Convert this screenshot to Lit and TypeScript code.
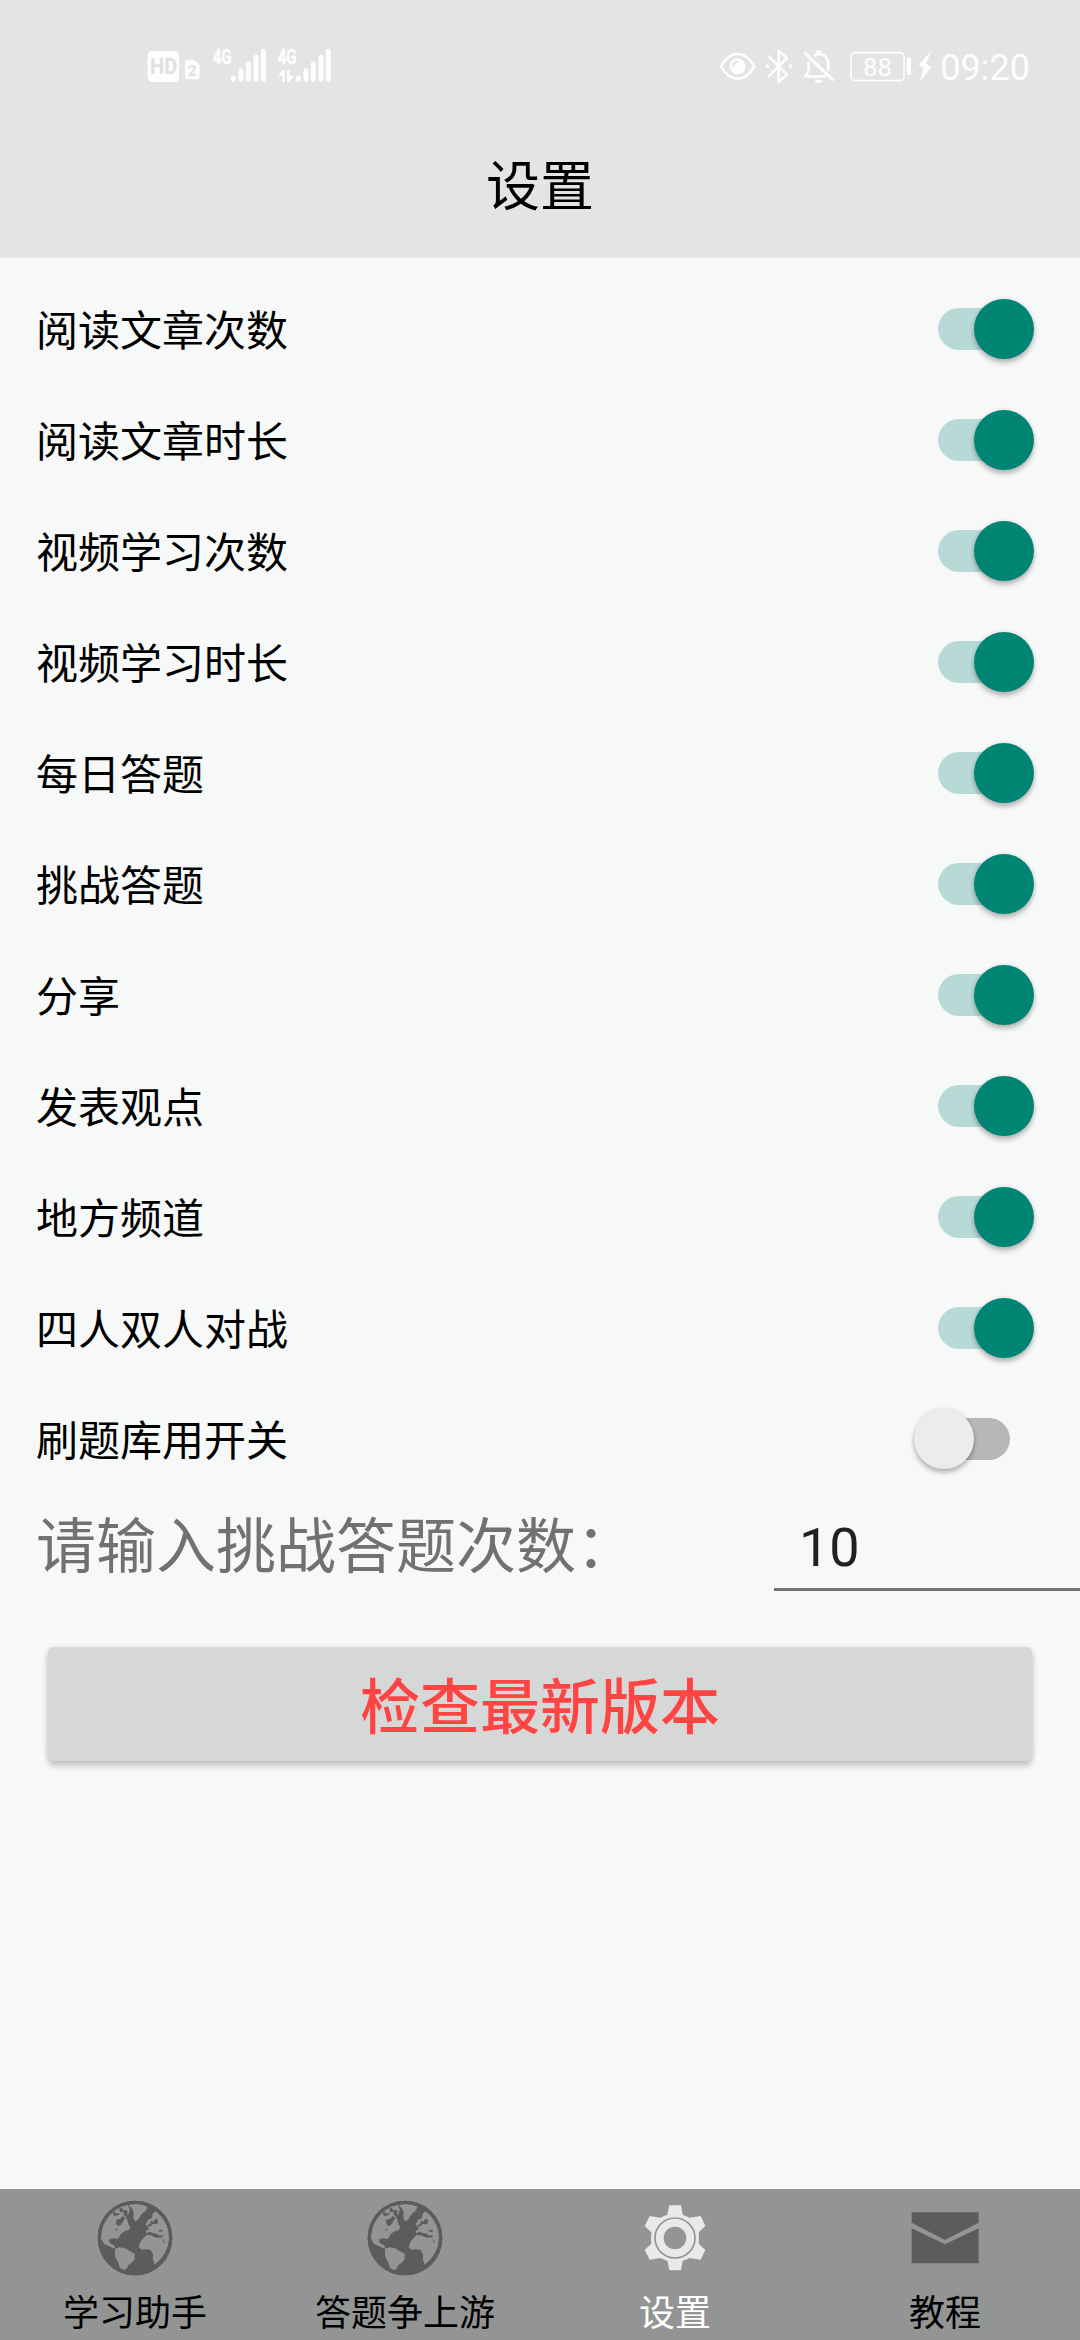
import { LitElement, html, css, svg } from "lit";
import { customElement, property, state } from "lit/decorators.js";
import { classMap } from "lit/directives/class-map.js";

/* Status bar glyphs share a 108-unit tall drawing space, 3 units per pixel. */
const signalBars = (x: number) => svg`
  <g stroke="#fdfdfd" stroke-width="15" stroke-linecap="round">
    <path d="M${x} 143v5M${x + 23} 122v26M${x + 45} 102v46M${x + 68} 82v66M${x + 90} 64v84" />
  </g>`;

@customElement("status-bar")
export class StatusBar extends LitElement {
  static styles = css`
    :host { display: flex; justify-content: space-between; height: 60px; padding: 48px 50px 0 147px; }
    .group { display: flex; align-items: flex-start; }
    svg { display: block; height: 36px; overflow: visible; flex: none; }
    .hd { width: 32px; margin-right: 6px; }
    .sim { width: 15px; margin-right: 12px; }
    .signal { width: 55px; margin-right: 10px; }
    .eye { width: 37px; margin-right: 9px; }
    .bt { width: 27px; margin-right: 11px; }
    .bell { width: 32px; margin-right: 15px; }
    .battery { width: 62px; margin-right: 6px; }
    .bolt { width: 14px; margin-right: 8px; }
    .time { font: 36px/40px Roboto, sans-serif; color: #fdfdfd; }
    text { font-family: Roboto, sans-serif; }
  `;
  render() {
    return html`
      <div class="group">
        <svg class="hd" viewBox="51 54 96 108">
          <rect x="53" y="63" width="94" height="93" rx="13" fill="#fdfdfd" />
          <text x="60" y="132" font-size="64" font-weight="700" fill="#e0e0e0" textLength="82" lengthAdjust="spacingAndGlyphs">HD</text>
        </svg>
        <svg class="sim" viewBox="165 54 45 108">
          <path d="M173 90h21l15 17v33q0 8-8 8h-28q-8 0-8-8V98q0-8 8-8z" fill="#fdfdfd" />
          <text x="173" y="138" font-size="46" font-weight="700" fill="#e0e0e0">2</text>
        </svg>
        <svg class="signal" viewBox="246 54 165 108">
          <text x="248" y="101" font-size="61" font-weight="700" fill="#fdfdfd" stroke="#fdfdfd" textLength="57" lengthAdjust="spacingAndGlyphs">4G</text>
          ${signalBars(310)}
        </svg>
        <svg class="signal" viewBox="441 54 165 108">
          <text x="443" y="101" font-size="61" font-weight="700" fill="#fdfdfd" stroke="#fdfdfd" textLength="57" lengthAdjust="spacingAndGlyphs">4G</text>
          <path d="M458 120h7v36h-8v-18h-13zM471 120h7v18h14l-15 18h-6z" fill="#fdfdfd" />
          ${signalBars(505)}
        </svg>
      </div>
      <div class="group">
        <svg class="eye" viewBox="55 54 111 108" fill="none" stroke="#fdfdfd">
          <path d="M61 109Q82 72 111 72T161 109Q140 146 111 146T61 109z" stroke-width="8" />
          <circle cx="111" cy="109" r="24" fill="#fdfdfd" stroke="none" />
          <path d="M98 109q0-13 13-14" stroke="#e4e4e4" stroke-width="6" stroke-linecap="round" />
        </svg>
        <svg class="bt" viewBox="194 54 81 108" fill="none" stroke="#fdfdfd" stroke-width="8">
          <path d="M205 79l55 55-25 22V62l25 22-55 55" stroke-linejoin="round" stroke-linecap="round" />
          <path d="M197 101l12 8-12 8zM274 101l-12 8 12 8z" fill="#fdfdfd" stroke="none" />
        </svg>
        <svg class="bell" viewBox="308 54 96 108" fill="none" stroke="#fdfdfd" stroke-width="8" stroke-linecap="round">
          <path d="M315 70l81 79" stroke-width="9" />
          <path d="M343 76q32-12 41 20v24M325 96v26l-10 17h58" stroke-linejoin="round" />
          <path d="M345 71q0-11 10-11t10 11z" fill="#fdfdfd" stroke="none" />
          <path d="M343 150h24q-3 10-12 10t-12-10z" fill="#fdfdfd" stroke="none" />
        </svg>
        <svg class="battery" viewBox="451 54 186 108">
          <rect x="454" y="68" width="159" height="84" rx="12" fill="none" stroke="#fdfdfd" stroke-width="5" />
          <rect x="621" y="83" width="13" height="53" rx="5" fill="#fdfdfd" />
          <text x="490" y="137" font-size="77" fill="#fdfdfd">88</text>
        </svg>
        <svg class="bolt" viewBox="652 54 42 108">
          <path d="M692 62l-38 44 14 8-11 43 36-47-17-9z" fill="#fdfdfd" />
        </svg>
        <span class="time">09:20</span>
      </div>`;
  }
}

@customElement("toggle-switch")
export class ToggleSwitch extends LitElement {
  @property({ type: Boolean }) on = false;
  static styles = css`
    :host { display: flex; width: 132px; height: 61px; align-items: center; justify-content: center; }
    .track { display: flex; align-items: center; width: 72px; height: 42px; border-radius: 21px; background: #b6b8b7; }
    .thumb {
      flex: none; width: 60px; height: 60px; margin-left: -24px; border-radius: 50%; background: #ececec;
      box-shadow: 0 4px 5px rgba(0, 0, 0, 0.24), 0 0 4px rgba(0, 0, 0, 0.12);
    }
    .track.on { background: #b7dad6; }
    .on .thumb { margin-left: 36px; background: #008575; }
  `;
  render() {
    return html`<div class=${classMap({ track: true, on: this.on })}><div class="thumb"></div></div>`;
  }
}

const globe = svg`
  <circle cx="405" cy="204" r="112" fill="#5b5d5c" />
  <g fill="#939594">
    <path d="M302 204Q304 152 340 122L362 108 384 106 389 118 386 132 376 137 382 150 386 164 391 172 386 180 374 184 363 191 358 200 352 208 343 205 331 206 326 213 332 221 343 226 346 236 334 232 312 221Z" />
    <path d="M385 106Q413 96 443 110L437 122 425 132 413 151 405 153 400 144 401 127 396 115Z" />
    <path d="M345 237L358 232 376 235 387 242 405 252 403 269 394 279 386 284 379 297 370 301 360 294 355 278 345 259Z" />
    <path d="M416 231L421 215 431 204 440 194 437 184 447 176 436 163 440 152 455 135 466 124Q507 154 508 204 505 252 464 284L459 270 459 252 451 239 436 238 425 239Z" />
  </g>
  <g fill="#5b5d5c">
    <path d="M349 149L361 146 368 138 376 143 370 154 363 165 354 168 348 161Z" />
    <path d="M338 129l7-5 3 8 7-4 5 5-10 4-8 1zM357 117l8-4 5 8 8-2 5 6-3 14-8-3-2-11-9 2z" />
    <path d="M345 177l9 1-4 5z" />
    <path d="M438 190L450 185 459 190 470 191 478 197 489 195 487 202 474 203 463 201 454 196 440 196Z" />
    <path d="M476 181l11-2 2 5-11 2zM486 204l9 13-3 3z" />
    <path d="M434 140L452 128 458 136 454 146 446 147 441 157 434 163ZM442 166l10-5-1-9 8 3 8-9 6 2 1 12-8 3-8-2-6 7-8 3z" />
  </g>
  <circle cx="405" cy="204" r="107" fill="none" stroke="#5b5d5c" stroke-width="10" />`;

const gear = svg`
  <path d="M388 106H423L428 134Q440 139 448 143L482 138 496 168 476 187Q478 204 476 221L496 240 482 269 448 264Q438 271 428 272L423 301H388L382 272Q370 269 362 264L329 269 314 240 334 221Q332 204 334 187L314 168 329 138 362 143Q370 138 382 134Z"
    fill="#e9e9e9" />
  <circle cx="405" cy="204" r="60" fill="none" stroke="#939594" stroke-width="5" />
  <circle cx="405" cy="204" r="34" fill="#939594" />`;

const mail = svg`
  <path d="M305 127H506V158L405 210 305 158ZM305 175L405 223 506 175V280H305Z" fill="#5b5d5c" />`;

@customElement("app-root")
export class AppRoot extends LitElement {
  @state() private settings = [
    { label: "阅读文章次数", on: true },
    { label: "阅读文章时长", on: true },
    { label: "视频学习次数", on: true },
    { label: "视频学习时长", on: true },
    { label: "每日答题", on: true },
    { label: "挑战答题", on: true },
    { label: "分享", on: true },
    { label: "发表观点", on: true },
    { label: "地方频道", on: true },
    { label: "四人双人对战", on: true },
    { label: "刷题库用开关", on: false },
  ];

  private tabs = [
    { label: "学习助手", icon: globe, active: false },
    { label: "答题争上游", icon: globe, active: false },
    { label: "设置", icon: gear, active: true },
    { label: "教程", icon: mail, active: false },
  ];

  static styles = css`
    :host {
      display: flex; flex-direction: column; width: 1080px; height: 2340px; overflow: hidden;
      background: #f7f9f8; color: #000; font-family: "Noto Sans CJK SC", sans-serif;
    }
    .header { height: 258px; background: #e4e4e4; }
    .title { margin: 0; font-size: 54px; font-weight: 400; line-height: 150px; text-align: center; }
    .list { flex: 1; padding-top: 15px; }
    .row { display: flex; align-items: center; justify-content: space-between; height: 111px; padding: 0 40px 0 36px; font-size: 42px; }
    .label { padding-bottom: 2px; }
    .count { display: flex; justify-content: space-between; height: 97px; padding-left: 36px; }
    .prompt { font-size: 60px; line-height: 96px; color: #707271; white-space: nowrap; }
    .field {
      box-sizing: border-box; width: 306px; padding: 14px 0 0 25px; border-bottom: 3px solid #737574;
      font: 54px/80px Roboto, sans-serif; color: #212121;
    }
    .check {
      display: block; width: 984px; height: 114px; margin: 56px 48px 0; padding: 0 0 3px; border: 0; border-radius: 6px;
      background: #d6d8d7; color: #ff4444; font: 500 60px/110px "Noto Sans CJK SC", sans-serif;
      box-shadow: 0 5px 6px rgba(0, 0, 0, 0.2), 0 0 5px rgba(0, 0, 0, 0.1);
    }
    .tabs { display: grid; grid-template-columns: repeat(4, 1fr); height: 151px; background: #939594; }
    .tab { display: flex; flex-direction: column; align-items: center; padding-top: 11px; font-size: 36px; line-height: 48px; }
    .tab svg { display: block; width: 76px; height: 76px; margin-bottom: 10px; }
    .active { color: #fff; }
  `;

  render() {
    return html`
      <header class="header">
        <status-bar></status-bar>
        <h1 class="title">设置</h1>
      </header>
      <main class="list">
        ${this.settings.map(
          (s) => html`<div class="row"><span class="label">${s.label}</span><toggle-switch ?on=${s.on}></toggle-switch></div>`
        )}
        <div class="count">
          <span class="prompt">请输入挑战答题次数：</span>
          <div class="field">10</div>
        </div>
        <button class="check">检查最新版本</button>
      </main>
      <nav class="tabs">
        ${this.tabs.map(
          (t) => html`<div class=${classMap({ tab: true, active: t.active })}>
            <svg viewBox="291 90 228 228">${t.icon}</svg>
            <span>${t.label}</span>
          </div>`
        )}
      </nav>`;
  }
}
